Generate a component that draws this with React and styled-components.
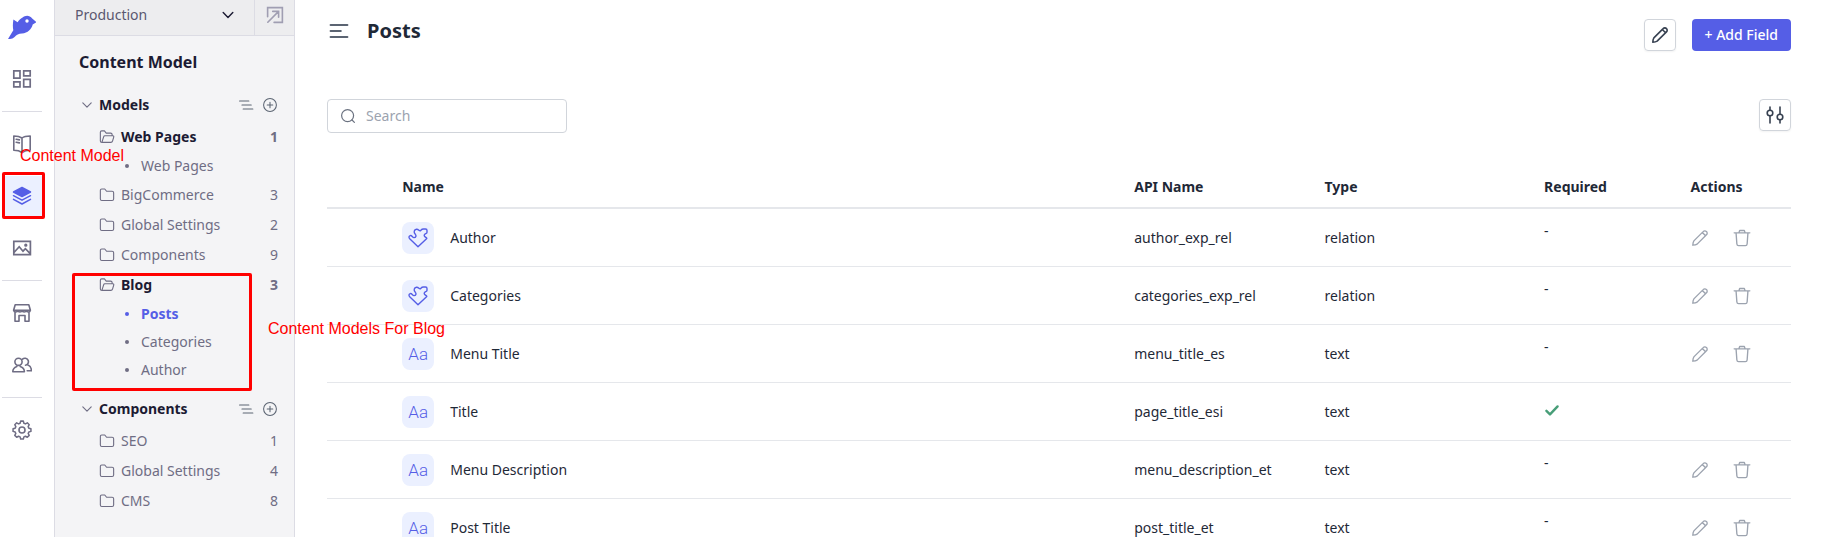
import React from "react";
import styled, { createGlobalStyle, css } from "styled-components";

const GlobalStyle = createGlobalStyle`
  * {
    box-sizing: border-box;
  }
  body {
    margin: 0;
    font-family: "Noto Sans", "Open Sans", sans-serif;
    font-size: 14px;
    line-height: 20px;
    color: #1f2937;
    background: #fff;
  }
  button {
    font: inherit;
    padding: 0;
    border: none;
    background: none;
    cursor: pointer;
  }
  svg {
    display: block;
    flex-shrink: 0;
  }
`;

const railGroups = [
  ["dashboard"],
  ["book", "layers", "image"],
  ["store", "people"],
  ["gear"],
];

const sections = [
  {
    title: "Models",
    folders: [
      { name: "Web Pages", count: 1, open: true, children: ["Web Pages"] },
      { name: "BigCommerce", count: 3 },
      { name: "Global Settings", count: 2 },
      { name: "Components", count: 9 },
      {
        name: "Blog",
        count: 3,
        open: true,
        children: ["Posts", "Categories", "Author"],
      },
    ],
  },
  {
    title: "Components",
    folders: [
      { name: "SEO", count: 1 },
      { name: "Global Settings", count: 4 },
      { name: "CMS", count: 8 },
    ],
  },
];

const fields = [
  { name: "Author", api: "author_exp_rel", type: "relation" },
  { name: "Categories", api: "categories_exp_rel", type: "relation" },
  { name: "Menu Title", api: "menu_title_es", type: "text" },
  { name: "Title", api: "page_title_esi", type: "text", required: true },
  { name: "Menu Description", api: "menu_description_et", type: "text" },
  { name: "Post Title", api: "post_title_et", type: "text" },
];

const Icon = ({ size = 20, stroke = 1.5, children, ...rest }) => (
  <svg
    width={size}
    height={size}
    viewBox="0 0 20 20"
    fill="none"
    stroke="currentColor"
    strokeWidth={stroke}
    strokeLinecap="round"
    strokeLinejoin="round"
    aria-hidden="true"
    {...rest}
  >
    {children}
  </svg>
);

const BirdLogo = () => (
  <svg width="28" height="24" viewBox="0 0 28 24" aria-hidden="true">
    <path
      fill="#555ee6"
      d="M0 24 5.3 15.2C4.6 11.6 4.8 8.4 5.4 4.4L9.6 7.2C11.2 5 13 3.6 14.6 2.6 17.2 0 21.5-.2 24.2 3.4L28.5 7.2 24.7 9.4C23.6 14 19.8 18 14 18.5 10.5 18.8 8.6 19.8 6.6 22 4.8 23.6 2.6 24.2 0 24Z"
    />
    <circle cx="19" cy="6" r="1.7" fill="#fff" />
  </svg>
);

const railIcons = {
  dashboard: (
    <Icon stroke={1.7} strokeLinejoin="miter">
      <path d="M1.8 1.8h6.2v7.4H1.8zM11.7 1.8h6.5v5h-6.5zM1.8 12.8h6.2v5H1.8zM11.7 10.4h6.5v7.4h-6.5z" />
    </Icon>
  ),
  book: (
    <Icon stroke={1.6}>
      <path d="M10 4v14.5M10 4C8 2.6 5 2 1.8 2v14.2C5 16.2 8 17 10 18.5M10 4c2-1.600 5-2 8.200-2v14.200c-3.200 0-6.200.8-8.200 2.300M4.200 5.200l3.200.7M4.200 8.200l3.200.7" />
    </Icon>
  ),
  layers: (
    <Icon stroke={1.5}>
      <path d="M10 1.5 18.5 6 10 10.5 1.5 6z" fill="currentColor" />
      <path d="m1.5 9.7 8.5 4.5 8.5-4.5M1.5 13.4l8.5 4.6 8.5-4.6" />
    </Icon>
  ),
  image: (
    <Icon stroke={1.7} strokeLinejoin="miter">
      <path d="M1.8 3.3h16.6v13.4H1.8zM2 14.5l5.2-5.7 3.8 4.4 2.4-2.5 4.8 5" />
      <circle cx="13.8" cy="7.2" r=".8" />
    </Icon>
  ),
  store: (
    <Icon stroke={1.6}>
      <path d="M3.2 1.7h13.6l1.6 5.6H1.6zM1.6 7.3c.5 2.2 3.8 2.2 4.2 0 .5 2.2 3.8 2.2 4.2 0 .5 2.2 3.8 2.2 4.2 0 .5 2.2 3.8 2.2 4.2 0M3 9.5v8.8h4v-5.8h6v5.8h4V9.5" />
    </Icon>
  ),
  people: (
    <Icon stroke={1.6}>
      <circle cx="6.5" cy="6.8" r="3.6" />
      <path d="M.8 16.8c0-3.2 1.6-4.5 4-5.400M8.200 11.400c2.600.9 4.200 2.200 4.200 5.400H.8M10.500 4.200a3.500 3.500 0 1 1 3 6M16 10c2.200.9 3.400 2.500 3.400 5.800h-4.200" />
    </Icon>
  ),
  gear: (
    <Icon stroke={1.6}>
      <path
        d="m8.600 1.600 2.800 0 .6 2.200 1.600.7 2-1.100 2 2-1.100 2 .7 1.600 2.200.6v2.800l-2.200.6-.7 1.600 1.100 2-2 2-2-1.100-1.600.7-.6 2.200H8.600L8 18.200l-1.600-.7-2 1.100-2-2 1.100-2L2.800 13 .6 12.400V9.600L2.800 9l.7-1.600-1.100-2 2-2 2 1.100L8 3.800z"
        transform="translate(.5 -.4) scale(.95)"
      />
      <circle cx="10" cy="10" r="3" />
    </Icon>
  ),
};

const PenIcon = ({ size = 18, stroke = 1.5 }) => (
  <Icon size={size} stroke={stroke}>
    <path d="M2 18c.1-2 .4-3.600 1.200-4.800L13.500 2.900a2.500 2.500 0 0 1 3.700 0 2.500 2.500 0 0 1 0 3.600L6.800 16.800C5.600 17.600 4 17.900 2 18ZM12.600 3.900l3.600 3.600" />
  </Icon>
);

const TrashIcon = () => (
  <Icon size={18} stroke={1.5}>
    <path d="M1.300 4.300h17.400M6.500 4.300l.9-2.600h5.200l.9 2.600M3.400 4.300l.9 12.400c.1 1.200.8 1.800 1.900 1.800h7.600c1.100 0 1.800-.6 1.900-1.800l.9-12.400" />
  </Icon>
);

const FolderIcon = ({ open }) => (
  <Icon size={16} stroke={1.4}>
    {open ? (
      <path d="M4.400 16.700h-.8c-1.200 0-1.900-.7-1.900-1.800V4.100c0-1 .7-1.700 1.700-1.700h3.400l2.200 2.700h5.500c1.200 0 1.900.7 1.900 1.800v1.400M3.600 16.700l2.300-7.200c.2-.7.7-1 1.400-1h9.900c1.100 0 1.500.7 1.200 1.700l-1.500 5c-.3 1-1 1.500-2 1.500z" />
    ) : (
      <path d="M1.700 4.400c0-1.200.7-1.900 1.800-1.900h3.700l2.300 2.800h6.900c1.200 0 1.900.7 1.900 1.900v7.700c0 1.200-.7 1.900-1.900 1.900H3.500c-1.200 0-1.800-.7-1.800-1.900z" />
    )}
  </Icon>
);

const ChevronIcon = ({ size = 14, stroke = 1.6 }) => (
  <Icon size={size} stroke={stroke}>
    <path d="m4 7 6 6 6-6" />
  </Icon>
);

const PuzzleIcon = () => (
  <Icon size={20} stroke={1.4}>
    <path d="M10 18.800 1.700 10.800C.6 9.700.8 8 2.200 7.600 4 7.100 4.300 9.600 6 9.600c2 0 2.600-2 1.300-3.400C5.400 4.200 6 1.500 8.500 1.200c2-.2 2.500 1.600 3.500 1.600S13 1 15.500 1h2c1.100 0 1.500.6 1.500 1.600v1.700c0 1.700-2.800 1.200-2.800 3.300 0 1.900 2.800 1.400 2.600 3z" />
  </Icon>
);

const Rail = ({ active }) => (
  <RailNav aria-label="Main">
    <LogoLink href="#home" aria-label="Home">
      <BirdLogo />
    </LogoLink>
    {railGroups.map((group) => (
      <RailGroup key={group[0]}>
        {group.map((id) => (
          <RailButton key={id} type="button" aria-label={id} $active={id === active}>
            {railIcons[id]}
          </RailButton>
        ))}
      </RailGroup>
    ))}
  </RailNav>
);

const SectionBlock = ({ section }) => (
  <Section>
    <SectionHeader>
      <ChevronIcon />
      <SectionTitle>{section.title}</SectionTitle>
      <ToolButton type="button" aria-label="Sort">
        <Icon size={16} stroke={1.5}>
          <path d="M2 5h11.500M5 10h11.500M6.500 15h12" />
        </Icon>
      </ToolButton>
      <ToolButton type="button" aria-label="Add">
        <Icon size={16} stroke={1.3}>
          <circle cx="10" cy="10" r="8" />
          <path d="M10 6.500v7M6.500 10h7" />
        </Icon>
      </ToolButton>
    </SectionHeader>
    {section.folders.map((folder) => (
      <React.Fragment key={folder.name}>
        <FolderRow href="#folder" $open={folder.open}>
          <FolderIcon open={folder.open} />
          <FolderName $open={folder.open}>{folder.name}</FolderName>
          <span>{folder.count}</span>
        </FolderRow>
        {folder.children?.map((child) => (
          <ChildRow key={child} href="#model" $active={child === "Posts"}>
            {child}
          </ChildRow>
        ))}
      </React.Fragment>
    ))}
  </Section>
);

const FieldRow = ({ field }) => (
  <tr>
    <Td />
    <Td>
      <NameCell>
        <Chip>{field.type === "relation" ? <PuzzleIcon /> : "Aa"}</Chip>
        {field.name}
      </NameCell>
    </Td>
    <Td>{field.api}</Td>
    <Td>{field.type}</Td>
    <Td $top>
      {field.required ? (
        <CheckMark>
          <Icon size={16} stroke={3}>
            <path d="m3 11 4.500 4.500L17 5.500" />
          </Icon>
        </CheckMark>
      ) : (
        "-"
      )}
    </Td>
    <Td>
      {!field.required && (
        <RowActions>
          <RowButton type="button" aria-label={`Edit ${field.name}`}>
            <PenIcon />
          </RowButton>
          <RowButton type="button" aria-label={`Delete ${field.name}`}>
            <TrashIcon />
          </RowButton>
        </RowActions>
      )}
    </Td>
  </tr>
);

const App = () => {
  return (
    <Shell>
      <GlobalStyle />
      <Rail active="layers" />
      <Sidebar>
        <EnvBar>
          <EnvButton type="button">
            Production
            <ChevronIcon size={16} stroke={1.8} />
          </EnvButton>
          <OpenLink href="#site" aria-label="Open site">
            <Icon size={18} stroke={1.8} strokeLinejoin="miter">
              <path d="M1.800 12V1.800h16.400v16.400H9M7.500 6h6.500v6.500M14 6 2 18" />
            </Icon>
          </OpenLink>
        </EnvBar>
        <SidebarTitle>Content Model</SidebarTitle>
        {sections.map((section) => (
          <SectionBlock key={section.title} section={section} />
        ))}
      </Sidebar>
      <Main>
        <TopBar>
          <ToolButton type="button" aria-label="Toggle menu">
            <Icon size={24} stroke={1.7}>
              <path d="M3 5h14M3 10h8.500M3 15h14" />
            </Icon>
          </ToolButton>
          <PageTitle>Posts</PageTitle>
          <SquareButton type="button" aria-label="Edit model">
            <PenIcon stroke={1.8} />
          </SquareButton>
          <AddButton type="button">+ Add Field</AddButton>
        </TopBar>
        <FilterBar>
          <SearchBox>
            <Icon size={16} stroke={1.5}>
              <circle cx="9.500" cy="9.500" r="7.500" />
              <path d="m15 15 3 3" />
            </Icon>
            <SearchInput type="text" placeholder="Search" aria-label="Search" />
          </SearchBox>
          <SquareButton type="button" aria-label="Filters">
            <Icon size={20} stroke={1.6}>
              <path d="M5 2v3M5 11v7M15 2v7M15 15v3" />
              <circle cx="5" cy="8" r="2.800" />
              <circle cx="15" cy="12" r="2.800" />
            </Icon>
          </SquareButton>
        </FilterBar>
        <Table>
          <colgroup>
            <Col $width="5%" />
            <Col $width="50%" />
            <Col $width="13%" />
            <Col $width="15%" />
            <Col $width="10%" />
            <Col $width="7%" />
          </colgroup>
          <thead>
            <tr>
              <Th />
              <Th>Name</Th>
              <Th>API Name</Th>
              <Th>Type</Th>
              <Th>Required</Th>
              <Th>Actions</Th>
            </tr>
          </thead>
          <tbody>
            {fields.map((field) => (
              <FieldRow key={field.name} field={field} />
            ))}
          </tbody>
        </Table>
      </Main>
      <Marker $left={2} $top={172} $width={43} $height={47} />
      <Marker $left={72} $top={273} $width={180} $height={118} />
      <Note $left={20} $top={146}>
        Content Model
      </Note>
      <Note $left={268} $top={319}>
        Content Models For Blog
      </Note>
    </Shell>
  );
};

export default App;

const Shell = styled.div`
  position: relative;
  display: flex;
  height: 100vh;
  overflow: hidden;
`;

const RailNav = styled.nav`
  width: 54px;
  flex-shrink: 0;
  padding: 15px 12px 0 2px;
`;

const LogoLink = styled.a`
  display: flex;
  justify-content: center;
  height: 44px;
`;

const RailGroup = styled.div`
  display: flex;
  flex-direction: column;
  gap: 12px;
  & + & {
    margin-top: 12px;
    padding-top: 12px;
    border-top: 1px solid #dcdce4;
  }
`;

const RailButton = styled.button`
  display: flex;
  align-items: center;
  justify-content: center;
  height: 40px;
  color: #6f6d84;
  ${({ $active }) =>
    $active &&
    css`
      color: #555ee6;
      background: #ebf0ff;
    `}
`;

const Sidebar = styled.aside`
  width: 241px;
  flex-shrink: 0;
  background: #f4f4f6;
  border-left: 1px solid #dcdce4;
  border-right: 1px solid #dcdce4;
`;

const EnvBar = styled.div`
  display: flex;
  height: 36px;
  background: #ededef;
  border-bottom: 1px solid #dcdce4;
`;

const EnvButton = styled.button`
  flex: 1;
  display: flex;
  align-items: center;
  justify-content: space-between;
  padding: 0 18px 5px 20px;
  color: #5a5870;
  svg {
    color: #1c1b33;
  }
`;

const OpenLink = styled.a`
  display: flex;
  justify-content: center;
  width: 40px;
  padding-top: 6px;
  color: #a09eb2;
  border-left: 1px solid #dcdce4;
`;

const SidebarTitle = styled.h2`
  margin: 14px 0;
  padding-left: 24px;
  font-size: 16px;
  line-height: 24px;
  color: #1c1b33;
`;

const Section = styled.section`
  padding: 0 16px 0 25px;
  margin-bottom: 8px;
`;

const SectionHeader = styled.div`
  display: flex;
  align-items: center;
  gap: 8px;
  height: 34px;
  color: #6f6d84;
`;

const SectionTitle = styled.h3`
  flex: 1;
  margin: 0 0 0 -3px;
  font-size: 14px;
  color: #1c1b33;
`;

const ToolButton = styled.button`
  color: #5b6472;
`;

const FolderRow = styled.a`
  display: flex;
  align-items: center;
  gap: 6px;
  height: 30px;
  padding-left: 19px;
  color: #6f6d84;
  text-decoration: none;
  font-weight: ${({ $open }) => ($open ? 700 : 400)};
`;

const FolderName = styled.span`
  flex: 1;
  color: ${({ $open }) => ($open ? "#1c1b33" : "inherit")};
`;

const ChildRow = styled.a`
  display: flex;
  align-items: center;
  gap: 12px;
  height: 28px;
  padding-left: 45px;
  text-decoration: none;
  color: ${({ $active }) => ($active ? "#555ee6" : "#6f6d84")};
  font-weight: ${({ $active }) => ($active ? 700 : 400)};
  &::before {
    content: "";
    width: 4px;
    height: 4px;
    border-radius: 50%;
    background: currentColor;
  }
`;

const Main = styled.main`
  flex: 1;
  min-width: 0;
  padding: 19px 30px 0 32px;
`;

const TopBar = styled.header`
  display: flex;
  align-items: flex-start;
  gap: 16px;
`;

const PageTitle = styled.h1`
  flex: 1;
  margin: 0;
  font-size: 20px;
  line-height: 24px;
`;

const SquareButton = styled.button`
  display: flex;
  align-items: center;
  justify-content: center;
  width: 32px;
  height: 32px;
  color: #374151;
  border: 1px solid #d1d5db;
  border-radius: 4px;
  box-shadow: 0 1px 2px rgba(0, 0, 0, 0.05);
`;

const AddButton = styled.button`
  height: 32px;
  padding: 0 13px;
  color: #fff;
  font-weight: 500;
  background: #555ee6;
  border-radius: 4px;
`;

const FilterBar = styled.div`
  display: flex;
  align-items: flex-start;
  justify-content: space-between;
  margin-top: 48px;
`;

const SearchBox = styled.label`
  display: flex;
  align-items: center;
  gap: 10px;
  width: 240px;
  height: 34px;
  padding: 0 12px;
  color: #6b7280;
  border: 1px solid #d1d5db;
  border-radius: 4px;
`;

const SearchInput = styled.input`
  flex: 1;
  min-width: 0;
  padding: 0;
  font: inherit;
  color: #1f2937;
  border: none;
  outline: none;
  background: none;
  &::placeholder {
    color: #9ca3af;
  }
`;

const Table = styled.table`
  width: 100%;
  margin-top: 33px;
  table-layout: fixed;
  border-collapse: separate;
  border-spacing: 0;
`;

const Col = styled.col`
  width: ${({ $width }) => $width};
`;

const Th = styled.th`
  height: 43px;
  padding: 0 2px;
  text-align: left;
  border-bottom: 2px solid #e5e7eb;
`;

const Td = styled.td`
  height: 58px;
  padding: ${({ $top }) => ($top ? "12px 2px 0" : "0 2px")};
  vertical-align: ${({ $top }) => ($top ? "top" : "middle")};
  border-bottom: 1px solid #e5e7eb;
`;

const NameCell = styled.div`
  display: flex;
  align-items: center;
  gap: 16px;
`;

const Chip = styled.span`
  display: flex;
  align-items: center;
  justify-content: center;
  width: 32px;
  height: 32px;
  font-family: Roboto, sans-serif;
  font-size: 17px;
  font-weight: 300;
  color: #555ee6;
  background: #ebf0ff;
  border-radius: 8px;
`;

const CheckMark = styled.span`
  display: flex;
  align-items: center;
  height: 30px;
  color: #489e78;
`;

const RowActions = styled.div`
  display: flex;
  gap: 24px;
`;

const RowButton = styled.button`
  color: #9ca3af;
`;

const Marker = styled.div`
  position: absolute;
  left: ${({ $left }) => $left}px;
  top: ${({ $top }) => $top}px;
  width: ${({ $width }) => $width}px;
  height: ${({ $height }) => $height}px;
  border: 3px solid #ff0000;
  border-radius: 2px;
  pointer-events: none;
`;

const Note = styled.span`
  position: absolute;
  left: ${({ $left }) => $left}px;
  top: ${({ $top }) => $top}px;
  font-family: "Liberation Sans", Arial, sans-serif;
  font-size: 16px;
  white-space: nowrap;
  color: #ff0000;
`;
